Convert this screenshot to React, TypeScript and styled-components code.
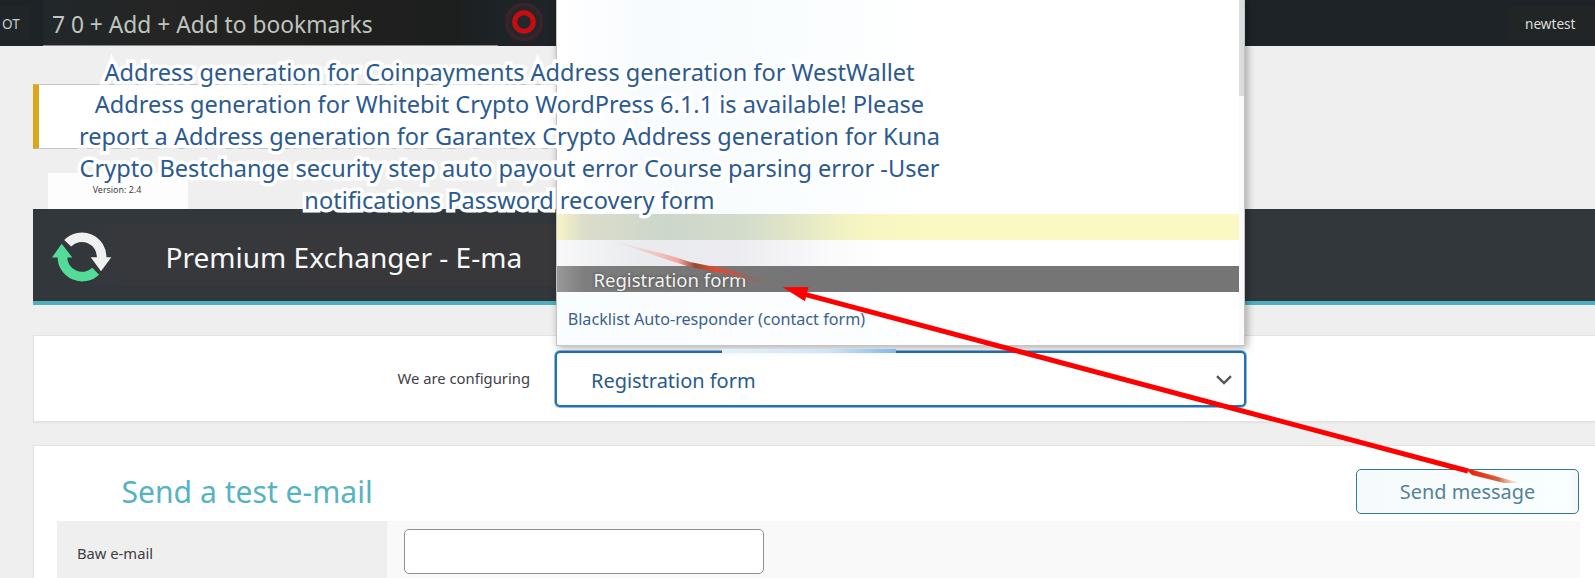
import React from "react";
import styled, { createGlobalStyle } from "styled-components";

const GlobalStyle = createGlobalStyle`
  * { box-sizing: border-box; }
  html, body { margin: 0; padding: 0; overflow: hidden; }
  body { background: #efefef; font-family: "Noto Sans", sans-serif; }
`;

const Page = styled.div`
  position: relative;
  width: 1595px;
  height: 578px;
  overflow: hidden;
  background: #efefef;
`;

const TopBar = styled.header`
  display: flex;
  align-items: center;
  height: 46px;
  background: #1d2327;
  color: #c9cdca;
`;

const BarItem = styled.span<{ $size: number }>`
  font-size: ${(p) => p.$size}px;
  line-height: 30px;
  white-space: nowrap;
`;

const SiteItem = styled(BarItem)`
  width: 31px;
  height: 34px;
  padding: 3px 0 0 2px;
  background: #202527;
`;

const Bookmarks = styled.div`
  display: flex;
  align-items: center;
  width: 455px;
  height: 46px;
  margin-left: 12px;
  padding: 4px 0 0 9px;
  color: #bfc5bf;
  border-bottom: 1px solid #8b8d8d;
  background: linear-gradient(90deg, #22272a, #242524 25%, #20201f 60%, #1d1e1e 90%, #1d2327);
`;

const UserItem = styled(BarItem)`
  margin-left: auto;
  width: 87px;
  height: 34px;
  padding: 3px 0 0 17px;
  background: #212526;
  color: #dddfdd;
`;

const RecordIcon = styled.svg`
  width: 40px;
  height: 42px;
  margin-left: 6px;
  margin-bottom: 2px;
`;

const Content = styled.main`
  display: flex;
  flex-direction: column;
  padding-left: 33px;
`;

const Notice = styled.div`
  height: 65px;
  margin-top: 38px;
  width: 900px;
  background: #fff;
  border: 1px solid #c3c4c7;
  border-left: 6px solid #dba617;
`;

const Version = styled.div`
  width: 140px;
  height: 36px;
  margin: 24px 0 0 15px;
  padding-right: 2px;
  background: #fdfdfd;
  color: #444;
  font-size: 8.91px;
  line-height: 34px;
  text-align: center;
`;

const Banner = styled.div`
  display: flex;
  align-items: center;
  height: 96px;
  padding-left: 17px;
  background: linear-gradient(90deg, #32373c 6%, #36383c 18%, #38383b 60%) #32373c;
  background-size: 522px 62px;
  background-position: 0 15px;
  background-repeat: no-repeat;
  border-bottom: 4px solid #4eb0bf;
`;

const Logo = styled.svg`
  width: 64px;
  height: 60px;
  margin-top: 4px;
`;

const BannerTitle = styled.h1`
  margin: 3px 0 0 51.5px;
  color: #f7f8f8;
  font-size: 28.05px;
  font-weight: 400;
  line-height: 40px;
`;

const Panel = styled.section`
  background: #fff;
  border: 1px solid #e3e3e3;
  border-right: 0;
  box-shadow: 0 1px 2px rgba(0, 0, 0, 0.06);
`;

const ConfigPanel = styled(Panel)`
  display: flex;
  align-items: center;
  height: 87px;
  margin-top: 30px;
`;

const ConfigLabel = styled.label`
  width: 496px;
  padding-bottom: 1px;
  text-align: right;
  color: #3e4048;
  font-size: 14.8px;
`;

const Select = styled.div`
  display: flex;
  align-items: center;
  justify-content: space-between;
  width: 691px;
  height: 56px;
  margin: 0 0 0 25px;
  padding: 3px 12px 0 34px;
  border: 2px solid #2271b1;
  border-radius: 5px;
  background: #fff;
  box-shadow: 0 0 0 1px #8fb8d9;
  color: #285a8c;
  font-size: 19.95px;
`;

const MailPanel = styled(Panel)`
  height: 140px;
  margin-top: 23px;
  padding: 23px 15px 0 23px;
`;

const MailHead = styled.div`
  display: flex;
  justify-content: space-between;
  height: 52px;
`;

const MailTitle = styled.h2`
  margin: 0 0 0 64.5px;
  color: #56b3c2;
  font-size: 30.1px;
  font-weight: 400;
  line-height: 46px;
`;

const SendButton = styled.button`
  width: 223px;
  height: 45px;
  margin-right: 1px;
  padding: 0;
  border: 1px solid #307b86;
  border-radius: 5px;
  background: linear-gradient(90deg, #f7fafc, #f8fcfd 50%, #f9fefe 96%, #f3f5f6);
  color: #548299;
  font-family: inherit;
  font-size: 19.9px;
`;

const FieldRow = styled.div`
  display: flex;
  height: 60px;
  background: #f9f9f9;
`;

const FieldLabel = styled.div`
  width: 330px;
  padding-left: 20px;
  background: #efefef;
  color: #3f3b42;
  font-size: 14.75px;
  line-height: 64px;
`;

const Input = styled.input`
  width: 360px;
  height: 45px;
  margin: 8px 0 0 17px;
  border: 1px solid #8c8f94;
  border-radius: 5px;
  background: #fff;
`;

const Dropdown = styled.div`
  position: absolute;
  top: -1px;
  left: 556px;
  display: grid;
  grid-template-columns: 1fr 5px;
  width: 689px;
  height: 347px;
  border: 1px solid #c4c4c4;
  background: #fff;
  box-shadow: 2px 2px 8px rgba(0, 0, 0, 0.33);
`;

const Options = styled.div`
  display: flex;
  flex-direction: column;
`;

const EmptyOptions = styled.div`
  height: 214px;
  background: linear-gradient(90deg, #fff 0, #f8fbfd 12%, #fafdfe 35%, #fff 55%);
`;

const HoverOption = styled.div`
  height: 26px;
  background: linear-gradient(90deg, #f5f4c5 0, #dcddca 4%, #ccd6cb 16%, #d4dccb 28%, #e9ebc5 38%, #f7f6c2 45%, #faf8c3 55%);
`;

const OptionGap = styled.div`
  height: 26px;
  background: linear-gradient(90deg, #f8f8f8, #e9ebee 12%, #ececf0 26%, #fafafb 40%, #fff 48%);
`;

const ActiveOption = styled.div`
  height: 26px;
  padding-left: 36.5px;
  background: linear-gradient(90deg, #999 0, #7e7e7e 4%, #777 20%, #757575 40%);
  color: #f3f3f1;
  font-size: 18.55px;
  line-height: 28px;
  text-shadow: 0 0 3px #555, 0 0 3px #666;
`;

const Option = styled.div`
  flex: 1;
  padding: 14px 0 0 10.7px;
  background: linear-gradient(90deg, #fafdfe, #fbfdfe 40%, #fff 55%);
  color: #3b6090;
  font-size: 16.18px;
  line-height: 26px;
`;

const ScrollTrack = styled.div`
  background: #fafafa;
`;

const ScrollThumb = styled.div`
  height: 96px;
  background: #dcdcdc;
`;

const Caption = styled.div`
  position: absolute;
  top: 56px;
  left: 59.5px;
  width: 900px;
  color: #2b5a90;
  font-size: 23.56px;
  line-height: 32px;
  text-align: center;
  white-space: nowrap;
  -webkit-text-stroke: 7px #fff;
  paint-order: stroke fill;
`;

const ArrowLayer = styled.svg`
  position: absolute;
  inset: 0;
  width: 1595px;
  height: 578px;
  pointer-events: none;
`;

const captionLines = [
  "Address generation for Coinpayments Address generation for WestWallet",
  "Address generation for Whitebit Crypto WordPress 6.1.1 is available! Please",
  "report a Address generation for Garantex Crypto Address generation for Kuna",
  "Crypto Bestchange security step auto payout error Course parsing error -User",
  "notifications Password recovery form",
];

export default function App() {
  return (
    <Page>
      <GlobalStyle />
      <TopBar>
        <SiteItem $size={13.5}>OT</SiteItem>
        <Bookmarks>
          <BarItem $size={22.76}>7 0 + Add + Add to bookmarks</BarItem>
        </Bookmarks>
        <RecordIcon viewBox="0 0 40 42">
          <circle cx="20" cy="21" r="19.5" fill="#3b2429" />
          <circle cx="20" cy="21" r="15.5" fill="#24272b" />
          <circle cx="20" cy="21" r="9.3" fill="none" stroke="#c90c10" strokeWidth="5" />
        </RecordIcon>
        <UserItem $size={13.6}>newtest</UserItem>
      </TopBar>

      <Content>
        <Notice />
        <Version>Version: 2.4</Version>
        <Banner>
          <Logo viewBox="-32 -30 64 60">
            <path d="M-14.3-13.7A19.7 19.7 0 0 1 19.6 1" fill="none" stroke="#f0f0f0" strokeWidth="9.6" />
            <path d="M8.7.3H29.3L19 14.3z" fill="#f0f0f0" />
            <path d="M13.7 14.2A19.7 19.7 0 0 1-19.6-.5" fill="none" stroke="#53dc98" strokeWidth="9.6" />
            <path d="M-30 .5H-9.7L-20.3-13.3z" fill="#53dc98" />
          </Logo>
          <BannerTitle>Premium Exchanger - E-ma</BannerTitle>
        </Banner>

        <ConfigPanel>
          <ConfigLabel>We are configuring</ConfigLabel>
          <Select>
            Registration form
            <svg width="16" height="10" viewBox="0 0 16 10">
              <path d="M1 1.2L8 8L15 1.2" fill="none" stroke="#555" strokeWidth="2.4" />
            </svg>
          </Select>
        </ConfigPanel>

        <MailPanel>
          <MailHead>
            <MailTitle>Send a test e-mail</MailTitle>
            <SendButton>Send message</SendButton>
          </MailHead>
          <FieldRow>
            <FieldLabel>Baw e-mail</FieldLabel>
            <Input />
          </FieldRow>
        </MailPanel>
      </Content>

      <Dropdown>
        <Options>
          <EmptyOptions />
          <HoverOption />
          <OptionGap />
          <ActiveOption>Registration form</ActiveOption>
          <Option>Blacklist Auto-responder (contact form)</Option>
        </Options>
        <ScrollTrack>
          <ScrollThumb />
        </ScrollTrack>
      </Dropdown>

      <Caption>
        {captionLines.map((line) => (
          <div key={line}>{line}</div>
        ))}
      </Caption>

      <ArrowLayer viewBox="0 0 1595 578">
        <defs>
          <linearGradient id="tail" x1="1466" x2="1520" y1="0" y2="0" gradientUnits="userSpaceOnUse">
            <stop offset="0" stopColor="#f01808" />
            <stop offset="0.6" stopColor="#d2633c" />
            <stop offset="1" stopColor="#fbd9c4" stopOpacity="0.3" />
          </linearGradient>
          <linearGradient id="streak" x1="610" x2="780" y1="0" y2="0" gradientUnits="userSpaceOnUse">
            <stop offset="0" stopColor="#f5c8c4" stopOpacity="0" />
            <stop offset="0.4" stopColor="#f0a8a0" />
            <stop offset="0.5" stopColor="#9a4a30" />
            <stop offset="0.62" stopColor="#e04a35" />
            <stop offset="0.8" stopColor="#94655f" />
            <stop offset="1" stopColor="#8a6a68" stopOpacity="0" />
          </linearGradient>
          <linearGradient id="edge" x1="722" x2="896" y1="0" y2="0" gradientUnits="userSpaceOnUse">
            <stop offset="0" stopColor="#e4f0f8" />
            <stop offset="0.6" stopColor="#cfe6f6" />
            <stop offset="1" stopColor="#7fbbe8" />
          </linearGradient>
        </defs>
        <path d="M722 351H896" stroke="url(#edge)" strokeWidth="4" />
        <path d="M610 240L672 256L690 262L735 271L778 287L730 275L690 267L668 260Z" fill="url(#streak)" />
        <path d="M804 294.2L1468 471" stroke="#fe0000" strokeWidth="5" />
        <path d="M782.5 287.3L808.5 287L805 301.3Z" fill="#fe0000" />
        <path d="M1464 467.5L1520 483L1504 483L1472 475Z" fill="url(#tail)" />
      </ArrowLayer>
    </Page>
  );
}
